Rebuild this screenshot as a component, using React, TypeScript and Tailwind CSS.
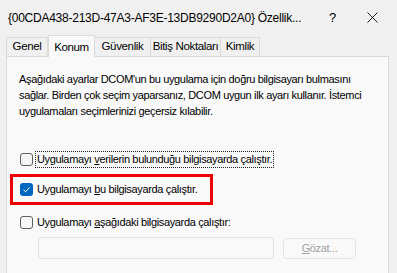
import { ReactNode } from "react";

type Tab = { label: string; width: number; active?: boolean };

const TABS: Tab[] = [
  { label: "Genel", width: 42 },
  { label: "Konum", width: 47, active: true },
  { label: "Güvenlik", width: 57 },
  { label: "Bitiş Noktaları", width: 71 },
  { label: "Kimlik", width: 40 },
];

function Checkbox({ checked = false }: { checked?: boolean }) {
  if (checked) {
    return (
      <span className="flex h-[13px] w-[13px] shrink-0 items-center justify-center rounded-[3px] bg-[#0067c0]">
        <svg width="9" height="9" viewBox="0 0 9 9" fill="none">
          <path d="M1.5 4.8 L3.6 6.8 L7.5 2.4" stroke="#ffffff" strokeWidth="1" />
        </svg>
      </span>
    );
  }
  return (
    <span className="h-[13px] w-[13px] shrink-0 rounded-[3px] border border-[#5f5f5f] bg-[#f6f6f6]" />
  );
}

function Option({
  checked,
  children,
  focused = false,
}: {
  checked?: boolean;
  children: ReactNode;
  focused?: boolean;
}) {
  return (
    <div className="flex items-center gap-[3px] whitespace-nowrap">
      <Checkbox checked={checked} />
      <span
        className={`px-[1px] leading-[15px] ${
          focused ? "outline outline-1 outline-dotted outline-[#222]" : ""
        }`}
      >
        {children}
      </span>
    </div>
  );
}

export default function App() {
  return (
    <div
      className="relative h-[273px] w-[397px] overflow-hidden bg-[#f0f0f0] text-[11px] tracking-[-0.35px] text-black"
      style={{ fontFamily: '"Liberation Sans", Arial, sans-serif' }}
    >
      {/* title bar */}
      <div className="flex h-[35px] items-center whitespace-nowrap text-[12px] tracking-[-0.25px]">
        <span className="pl-[8px]">
          {"{00CDA438-213D-47A3-AF3E-13DB9290D2A0}"} Özellik...
        </span>
        <span className="ml-auto w-[14px] text-[13px] leading-none">?</span>
        <svg className="ml-[24px] mr-[19px]" width="11" height="11" viewBox="0 0 11 11">
          <path d="M0.5 0.5 L10.5 10.5 M10.5 0.5 L0.5 10.5" stroke="#1a1a1a" strokeWidth="1" />
        </svg>
      </div>

      {/* tabs */}
      <div className="flex h-[21px] items-end whitespace-nowrap pl-[6px] text-[11.5px] tracking-[-0.35px]">
        {TABS.map((t) =>
          t.active ? (
            <div
              key={t.label}
              style={{ width: t.width }}
              className="relative z-10 -mb-px flex h-[22px] items-start justify-center border border-b-0 border-[#dadada] bg-[#f9f9f9] pt-[3px]"
            >
              {t.label}
            </div>
          ) : (
            <div
              key={t.label}
              style={{ width: t.width }}
              className="-ml-px flex h-[19px] items-center justify-center border border-b-0 border-[#dadada] bg-[#f0f0f0] first:ml-0"
            >
              {t.label}
            </div>
          )
        )}
      </div>

      {/* panel */}
      <div className="ml-[6px] h-[230px] w-[383px] border border-[#dadada] bg-[#f9f9f9] pl-[12px] pt-[14px]">
        <p className="whitespace-nowrap leading-[16px]">
          Aşağıdaki ayarlar DCOM'un bu uygulama için doğru bilgisayarı bulmasını
          <br />
          sağlar. Birden çok seçim yaparsanız, DCOM uygun ilk ayarı kullanır. İstemci
          <br />
          uygulamaları seçimlerinizi geçersiz kılabilir.
        </p>

        <div className="mt-[33px] pl-[1px]">
          <Option focused>
            Uygulamayı <u>v</u>erilerin bulunduğu bilgisayarda çalıştır.
          </Option>
        </div>

        <div className="-ml-[9px] mt-[7px] flex h-[31px] w-[203px] items-center border-[3px] border-[#ee0000] pl-[7px]">
          <Option checked>
            Uygulamayı <u>b</u>u bilgisayarda çalıştır.
          </Option>
        </div>

        <div className="mt-[10px] pl-[1px]">
          <Option>
            Uygulamayı <u>a</u>şağıdaki bilgisayarda çalıştır:
          </Option>
        </div>

        <div className="mt-[7px] flex items-center pl-[19px]">
          <div className="h-[22px] w-[236px] rounded-[3px] border border-[#e3e3e3] bg-[#f9f9f9]" />
          <button className="ml-[9px] h-[21px] w-[73px] rounded-[4px] border border-[#e3e3e3] bg-[#f9f9f9] text-[#a0a0a0]">
            <u>G</u>özat...
          </button>
        </div>
      </div>
    </div>
  );
}
